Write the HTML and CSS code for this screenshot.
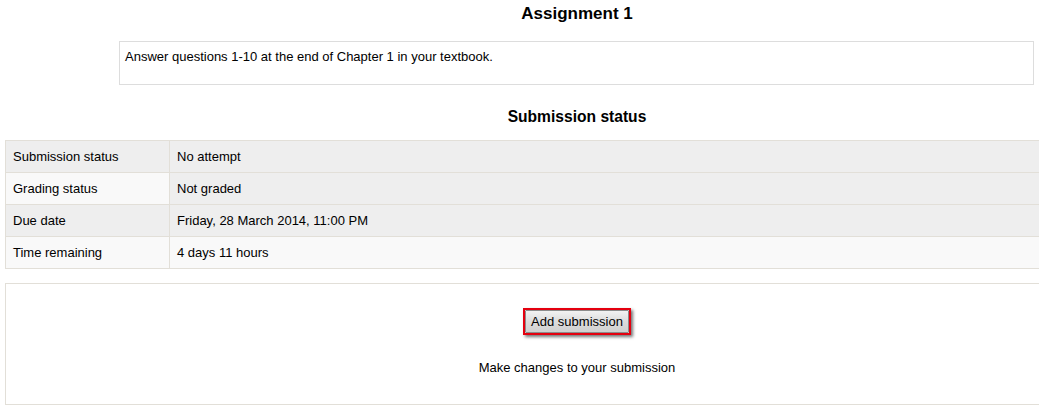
FILE: index.html
```html
<!DOCTYPE html>
<html>
<head>
<meta charset="utf-8">
<link rel="stylesheet" href="styles.css">
</head>
<body>
<div class="viewport">
<div class="page">
  <h2 class="title">Assignment 1</h2>
  <div class="intro">Answer questions 1-10 at the end of Chapter 1 in your textbook.</div>
  <h3 class="subtitle">Submission status</h3>
  <table class="status">
    <tr class="r1"><td class="c0">Submission status</td><td class="c1">No attempt</td></tr>
    <tr class="r0"><td class="c0">Grading status</td><td class="c1 dark">Not graded</td></tr>
    <tr class="r1"><td class="c0">Due date</td><td class="c1">Friday, 28 March 2014, 11:00 PM</td></tr>
    <tr class="r0"><td class="c0">Time remaining</td><td class="c1">4 days 11 hours</td></tr>
  </table>
  <div class="actions">
    <div class="highlight"><button class="btn" type="button">Add submission</button></div>
    <div class="hint">Make changes to your submission</div>
  </div>
</div>
</div>
</body>
</html>
```
FILE: styles.css
```css
html, body {
  margin: 0;
  padding: 0;
  background: #fff;
  overflow: hidden;
}
body {
  font-family: "Liberation Sans", Arial, sans-serif;
  font-size: 13px;
  color: #000;
}
.viewport {
  width: 1039px;
  height: 411px;
  overflow: hidden;
}
.page {
  width: 1144px;
  margin-left: 5px;
}
.title {
  margin: 0;
  padding-top: 4px;
  font-size: 17px;
  line-height: 20px;
  font-weight: bold;
  text-align: center;
}
.intro {
  box-sizing: border-box;
  margin: 17px 0 0 114px;
  width: 915px;
  height: 44px;
  border: 1px solid #dddddd;
  padding: 5px 5px;
  line-height: 19px;
}
.subtitle {
  margin: 22px 0 13px;
  font-size: 15.6px;
  line-height: 20px;
  font-weight: bold;
  text-align: center;
}
.status {
  width: 100%;
  border-collapse: collapse;
}
.status td {
  border: 1px solid #e2dfd8;
  padding: 0 7px;
  height: 32px;
  box-sizing: border-box;
  line-height: 15px;
  vertical-align: middle;
}
.status .c0 {
  width: 164px;
}
.status .r1 td { background: #eeeeee; }
.status .r0 td { background: #f9f9f9; }
.status .r0 td.dark { background: #eeeeee; }
.actions {
  box-sizing: border-box;
  margin-top: 14px;
  height: 122px;
  border: 1px solid #e2dfd8;
  padding-top: 24px;
  display: flex;
  flex-direction: column;
  align-items: center;
}
.highlight {
  box-sizing: border-box;
  width: 108px;
  height: 27px;
  border: 2px solid #e4000f;
  box-shadow: 2px 2px 3px rgba(0, 0, 0, 0.55);
  display: flex;
}
.btn {
  flex: 1;
  margin: 0;
  border: 1px solid #8c8c8c;
  border-radius: 1px;
  background: linear-gradient(#f2f2f2, #dcdcdc 50%, #d0d0d0);
  font-family: "Liberation Sans", Arial, sans-serif;
  font-size: 13px;
  color: #000;
  padding: 0;
  line-height: 21px;
}
.hint {
  margin-top: 25px;
  line-height: 15px;
}
```
